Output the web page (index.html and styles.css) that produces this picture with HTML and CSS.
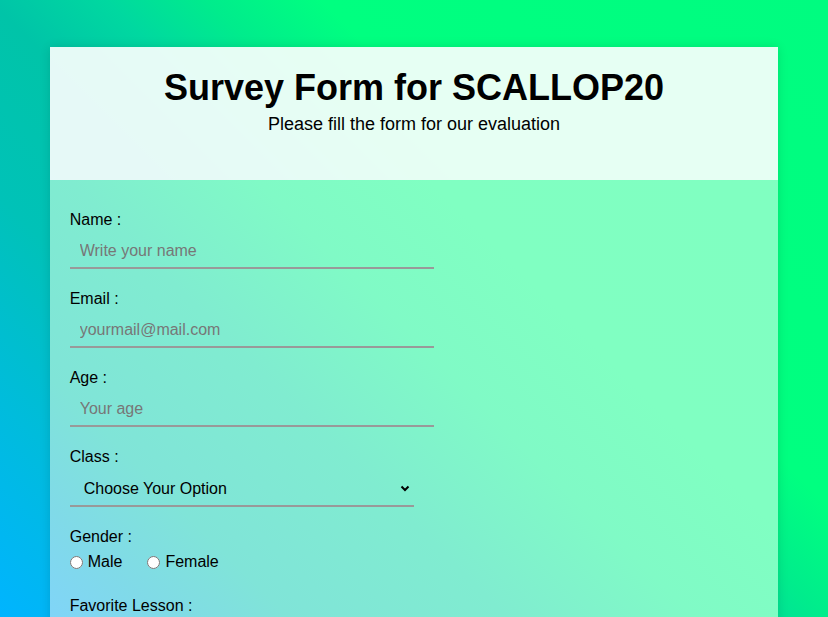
FILE: index.html
```html
<!DOCTYPE html>
<html lang="en">
<head>
<meta charset="utf-8">
<title>Survey Form for SCALLOP20</title>
<link rel="stylesheet" href="styles.css">
</head>
<body>
<div class="card">
  <header class="card-header">
    <h1 class="title">Survey Form for SCALLOP20</h1>
    <p class="subtitle">Please fill the form for our evaluation</p>
  </header>
  <form class="card-body">
    <div class="field">
      <label class="label" for="name">Name :</label>
      <input class="text-input" id="name" type="text" placeholder="Write your name">
    </div>
    <div class="field">
      <label class="label" for="email">Email :</label>
      <input class="text-input" id="email" type="email" placeholder="yourmail@mail.com">
    </div>
    <div class="field">
      <label class="label" for="age">Age :</label>
      <input class="text-input" id="age" type="text" placeholder="Your age">
    </div>
    <div class="field">
      <label class="label" for="class">Class :</label>
      <div class="select-wrap">
        <select class="select" id="class">
          <option>Choose Your Option</option>
          <option>Frontend</option>
          <option>Backend</option>
          <option>Mobile</option>
        </select>
        <svg class="chevron" width="10" height="7" viewBox="0 0 10 7" aria-hidden="true"><polyline points="1.5,1.5 5,5 8.5,1.5" fill="none" stroke="#000" stroke-width="2"/></svg>
      </div>
    </div>
    <div class="field field-gender">
      <span class="label">Gender :</span>
      <div class="choice-row">
        <label class="choice"><input class="radio" type="radio" name="gender">Male</label>
        <label class="choice"><input class="radio" type="radio" name="gender">Female</label>
      </div>
    </div>
    <div class="field">
      <span class="label">Favorite Lesson :</span>
      <div class="choice-row choice-row-lessons">
        <label class="choice"><input class="radio" type="checkbox">HTML</label>
        <label class="choice"><input class="radio" type="checkbox">CSS</label>
        <label class="choice"><input class="radio" type="checkbox">JavaScript</label>
      </div>
    </div>
    <div class="field">
      <label class="label" for="comment">Comments :</label>
      <textarea class="textarea" id="comment" placeholder="Write your comments"></textarea>
    </div>
    <button class="submit" type="submit">Submit</button>
  </form>
</div>
</body>
</html>
```
FILE: styles.css
```css
html {
  min-height: 100%;
  background: linear-gradient(45deg, #00b4ff 0%, #00bcdc 15%, #00c2b8 29%, #00c4a8 42%, #00d8a0 50%, #00ec8c 57%, #00ff80 65%, #00fc80 100%) fixed;
}

body {
  margin: 0;
  font-family: "Liberation Sans", Arial, sans-serif;
  color: #000;
}

.card {
  width: 88%;
  margin: 47px auto 40px;
  box-shadow: 0 0 10px rgba(0, 0, 0, 0.12);
}

.card-header {
  background: rgba(255, 255, 255, 0.9);
  text-align: center;
  padding: 20px 0 45px;
}

.title {
  margin: 0;
  font-size: 36px;
  line-height: 41px;
  font-weight: 700;
}

.subtitle {
  margin: 6px 0 0;
  font-size: 18px;
  line-height: 21px;
}

.card-body {
  display: block;
  background: linear-gradient(45deg, #80d2ff 0%, #80dae8 11%, #80e4d8 20%, #80ecd0 35%, #80fac6 48%, #80ffc2 60%, #80ffc0 100%) fixed;
  padding: 30px 20px 40px;
}

.field {
  margin-bottom: 20px;
}

.field-gender {
  margin-bottom: 23px;
}

.label {
  display: block;
  font-size: 16px;
  line-height: 18px;
  padding-top: 1px;
  margin-bottom: 4px;
}

.text-input {
  display: block;
  box-sizing: border-box;
  width: 364px;
  height: 36px;
  padding: 9px 10px 7px;
  border: none;
  border-bottom: 2px solid #999;
  background: transparent;
  font-family: inherit;
  font-size: 16px;
  line-height: 18px;
  color: #000;
  outline: none;
}

.text-input::placeholder,
.textarea::placeholder {
  color: #777;
}

.select-wrap {
  position: relative;
  width: 344px;
}

.select {
  display: block;
  box-sizing: border-box;
  width: 344px;
  height: 37px;
  padding: 2px 24px 0 14px;
  border: none;
  border-bottom: 2px solid #999;
  border-radius: 0;
  background: transparent;
  font-family: inherit;
  font-size: 16px;
  color: #000;
  -webkit-appearance: none;
  appearance: none;
  outline: none;
}

.chevron {
  position: absolute;
  right: 4px;
  top: 15px;
  pointer-events: none;
}

.choice-row {
  display: flex;
  align-items: center;
  gap: 25px;
  height: 22px;
  padding-top: 1px;
  font-size: 16px;
}

.choice-row-lessons {
  margin-top: 8px;
}

.choice {
  display: flex;
  align-items: center;
  gap: 5px;
  line-height: 18px;
}

.radio {
  margin: 0;
  width: 13px;
  height: 13px;
}

.textarea {
  display: block;
  box-sizing: border-box;
  width: 364px;
  height: 90px;
  padding: 8px 10px;
  border: none;
  border-bottom: 2px solid #999;
  background: transparent;
  font-family: inherit;
  font-size: 16px;
  resize: none;
  outline: none;
}

.submit {
  padding: 10px 30px;
  border: none;
  background: #00b4ff;
  color: #fff;
  font-family: inherit;
  font-size: 16px;
}
```
